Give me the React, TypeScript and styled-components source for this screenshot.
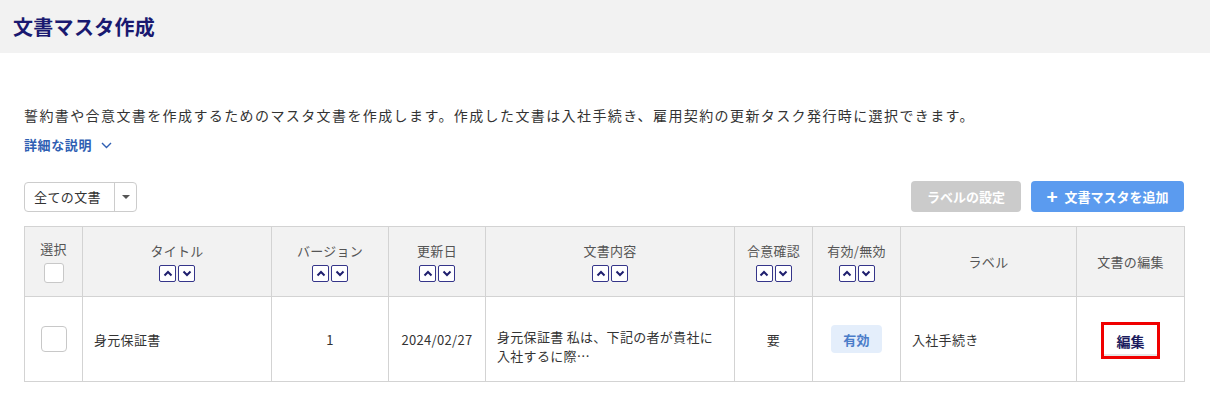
import React from "react";
import styled, { createGlobalStyle } from "styled-components";

const Global = createGlobalStyle`
  html, body { margin: 0; padding: 0; background: #fff; }
  body { font-family: "Noto Sans CJK JP", "Noto Sans", "Liberation Sans", sans-serif; color: #333; }
  * { box-sizing: border-box; }
`;

const Header = styled.header`
  height: 53px;
  background: #f2f2f2;
  display: flex;
  align-items: center;
  padding-left: 13px;
`;

const Title = styled.h1`
  margin: 0;
  font-size: 20px;
  font-weight: 700;
  color: #191970;
  line-height: 28px;
  letter-spacing: 0.3px;
`;

const Main = styled.main`
  padding: 52px 26px 0 24px;
`;

const Description = styled.p`
  margin: 0;
  font-size: 14px;
  line-height: 20px;
  letter-spacing: 1.4px;
  color: #333;
`;

const DetailLink = styled.a`
  display: inline-flex;
  align-items: center;
  gap: 9px;
  margin-top: 10px;
  font-size: 13px;
  line-height: 20px;
  letter-spacing: 0.6px;
  font-weight: 700;
  color: #2f5fb3;
  cursor: pointer;
`;

const Toolbar = styled.div`
  margin-top: 26px;
  display: flex;
  align-items: center;
  justify-content: space-between;
`;

const Select = styled.div`
  display: flex;
  height: 30px;
  width: 113px;
  border: 1px solid #ccc;
  border-radius: 4px;
  background: #fff;
`;

const SelectLabel = styled.span`
  flex: 1;
  display: flex;
  align-items: center;
  padding-left: 9px;
  font-size: 13px;
  letter-spacing: 0.4px;
  color: #333;
`;

const SelectCaret = styled.span`
  width: 22px;
  border-left: 1px solid #ccc;
  display: flex;
  align-items: center;
  justify-content: center;
  &::after {
    content: "";
    border-left: 4px solid transparent;
    border-right: 4px solid transparent;
    border-top: 4px solid #555;
  }
`;

const Actions = styled.div`
  display: flex;
  gap: 10px;
`;

const ActionButton = styled.button<{ $primary?: boolean }>`
  height: 31px;
  width: ${(p) => (p.$primary ? "153px" : "110px")};
  justify-content: center;
  border: none;
  border-radius: 4px;
  background: ${(p) => (p.$primary ? "#5b9bef" : "#cbcbcb")};
  color: #fff;
  font-family: inherit;
  font-size: 13px;
  font-weight: 700;
  display: flex;
  align-items: center;
  gap: 7px;
  padding: 0;
`;

const Plus = styled.span`
  font-size: 19px;
  font-weight: 700;
  line-height: 1;
  margin-top: -2px;
`;

const Table = styled.table`
  margin-top: 14px;
  width: 1160px;
  border-collapse: collapse;
  table-layout: fixed;
  border: 1px solid #d3d3d3;
`;

const Th = styled.th`
  height: 70px;
  background: #f2f2f2;
  border: 1px solid #d3d3d3;
  font-size: 13px;
  font-weight: 400;
  color: #555;
  vertical-align: middle;
  text-align: center;
  padding: 0;
`;

const HeadInner = styled.div`
  display: flex;
  flex-direction: column;
  align-items: center;
  gap: 5px;
  line-height: 18px;
  letter-spacing: 0.3px;
`;

const SortGroup = styled.div`
  display: flex;
  gap: 2px;
`;

const SortBtn = styled.span`
  width: 17px;
  height: 17px;
  border: 1.5px solid #35358a;
  border-radius: 2px;
  background: #fff;
  display: flex;
  align-items: center;
  justify-content: center;
`;

const Td = styled.td<{ $align?: string; $top?: boolean }>`
  height: 85px;
  border: 1px solid #d3d3d3;
  font-size: 13px;
  color: #333;
  line-height: 19px;
  letter-spacing: 0.3px;
  text-align: ${(p) => p.$align || "left"};
  vertical-align: ${(p) => (p.$top ? "top" : "middle")};
  padding: ${(p) => (p.$top ? "30px 10px 0 11px" : "0 11px")};
`;

const Check = styled.span<{ $size: number; $radius: number }>`
  display: inline-block;
  width: ${(p) => p.$size}px;
  height: ${(p) => p.$size}px;
  border: 1px solid #c8c8c8;
  border-radius: ${(p) => p.$radius}px;
  background: #fff;
  vertical-align: middle;
`;

const Badge = styled.span`
  display: inline-flex;
  align-items: center;
  justify-content: center;
  width: 51px;
  height: 28px;
  border-radius: 4px;
  background: #e4eefb;
  color: #4a7cc9;
  font-weight: 700;
  font-size: 13px;
`;

const EditButton = styled.button`
  width: 59px;
  height: 37px;
  border: 3px solid #f00000;
  background: #fff;
  box-shadow: inset 0 -2px 0 #e6e6e6;
  color: #1c1c5e;
  font-family: inherit;
  font-size: 14px;
  font-weight: 700;
  padding: 0;
  margin-top: 3px;
`;

const Chevron = ({ up }: { up?: boolean }) => (
  <svg width="10" height="7" viewBox="0 0 10 7">
    <polyline
      points={up ? "1.5,5.5 5,2 8.5,5.5" : "1.5,1.5 5,5 8.5,1.5"}
      fill="none"
      stroke="#1f1f6e"
      strokeWidth="2"
    />
  </svg>
);

const Sort = () => (
  <SortGroup>
    <SortBtn>
      <Chevron up />
    </SortBtn>
    <SortBtn>
      <Chevron />
    </SortBtn>
  </SortGroup>
);

const columns: { label: string; width: number; sort?: boolean }[] = [
  { label: "選択", width: 58 },
  { label: "タイトル", width: 189, sort: true },
  { label: "バージョン", width: 117, sort: true },
  { label: "更新日", width: 97, sort: true },
  { label: "文書内容", width: 249, sort: true },
  { label: "合意確認", width: 78, sort: true },
  { label: "有効/無効", width: 88, sort: true },
  { label: "ラベル", width: 176 },
  { label: "文書の編集", width: 108 },
];

export default function App() {
  return (
    <>
      <Global />
      <Header>
        <Title>文書マスタ作成</Title>
      </Header>
      <Main>
        <Description>
          誓約書や合意文書を作成するためのマスタ文書を作成します。作成した文書は入社手続き、雇用契約の更新タスク発行時に選択できます。
        </Description>
        <DetailLink>
          詳細な説明
          <svg width="11" height="7" viewBox="0 0 11 7">
            <polyline points="1,1 5.5,5.5 10,1" fill="none" stroke="#2f5fb3" strokeWidth="1.4" />
          </svg>
        </DetailLink>
        <Toolbar>
          <Select>
            <SelectLabel>全ての文書</SelectLabel>
            <SelectCaret />
          </Select>
          <Actions>
            <ActionButton>ラベルの設定</ActionButton>
            <ActionButton $primary>
              <Plus>+</Plus>文書マスタを追加
            </ActionButton>
          </Actions>
        </Toolbar>
        <Table>
          <colgroup>
            {columns.map((c) => (
              <col key={c.label} style={{ width: c.width }} />
            ))}
          </colgroup>
          <thead>
            <tr>
              {columns.map((c, i) => (
                <Th key={c.label}>
                  <HeadInner>
                    <span>{c.label}</span>
                    {c.sort && <Sort />}
                    {i === 0 && <Check $size={20} $radius={3} />}
                  </HeadInner>
                </Th>
              ))}
            </tr>
          </thead>
          <tbody>
            <tr>
              <Td $align="center">
                <Check $size={26} $radius={4} />
              </Td>
              <Td>身元保証書</Td>
              <Td $align="center">1</Td>
              <Td $align="center">2024/02/27</Td>
              <Td $top>
                身元保証書 私は、下記の者が貴社に
                <br />
                入社するに際…
              </Td>
              <Td $align="center">要</Td>
              <Td $align="center">
                <Badge>有効</Badge>
              </Td>
              <Td>入社手続き</Td>
              <Td $align="center">
                <EditButton>編集</EditButton>
              </Td>
            </tr>
          </tbody>
        </Table>
      </Main>
    </>
  );
}
